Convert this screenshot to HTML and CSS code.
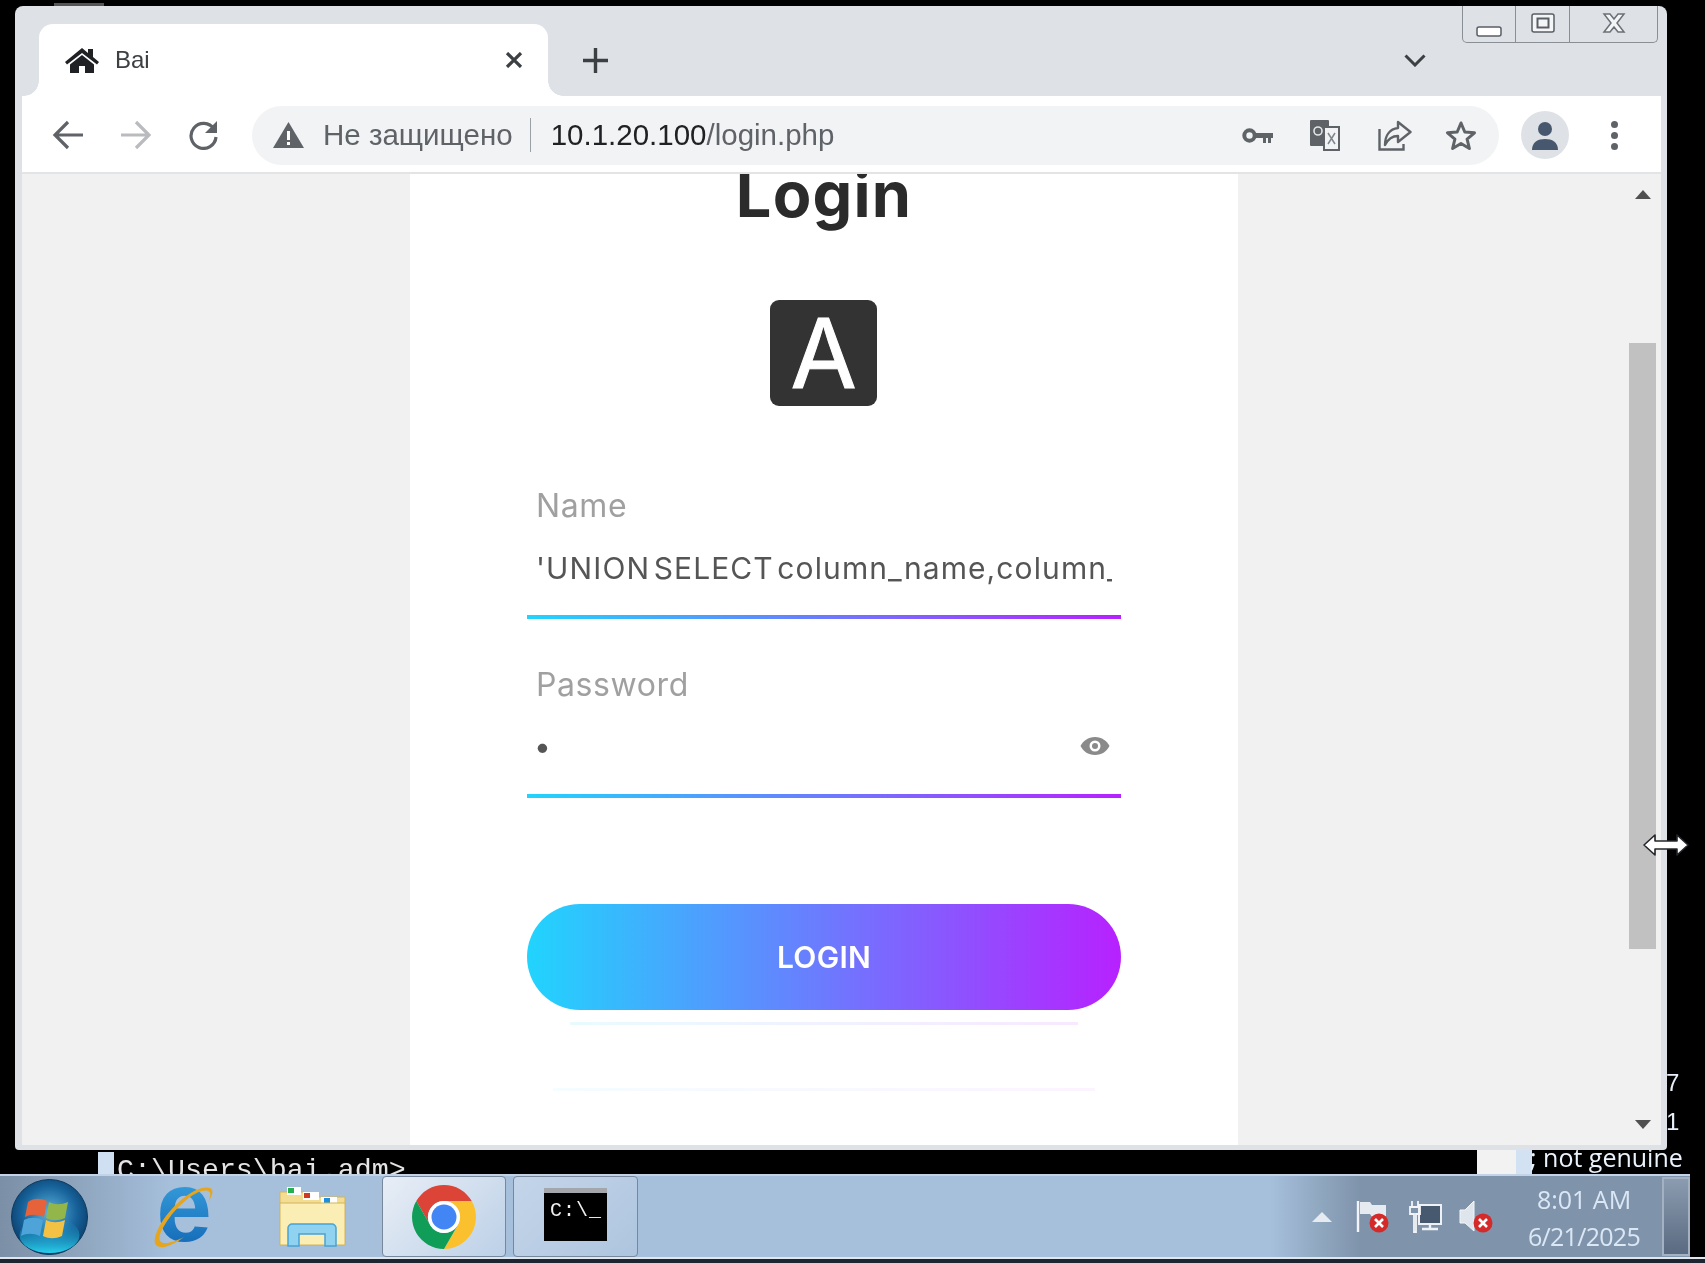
FILE: index.html
```html
<!DOCTYPE html>
<html lang="ru">
<head>
    <meta charset="UTF-8">
    <meta name="viewport" content="width=device-width, initial-scale=1.0">
    <title>Bai</title>
    <link rel="stylesheet" href="styles.css">
</head>
<body>
    <div class="desktop">
        <div class="smudge"></div>
        <div class="console-line">C:\Users\bai.adm&gt;</div>
        <div class="console-cursor"></div>
        <div class="console-digit digit-7">7</div>
        <div class="console-digit digit-1">1</div>
        <div class="genuine"><span class="genuine-block"></span><span class="genuine-text">; not genuine</span></div>

        <div class="window">
            <div class="win-controls">
                <div class="win-btn btn-min"><svg width="26" height="11" viewBox="0 0 26 11"><rect x="1" y="1" width="24" height="9" rx="2" fill="#fff" stroke="#5a5f66" stroke-width="1.5"/></svg></div>
                <div class="win-btn btn-max"><svg width="24" height="20" viewBox="0 0 24 20"><rect x="1" y="1" width="22" height="18" rx="2" fill="#f4f5f6" stroke="#5a5f66" stroke-width="1.5"/><rect x="6.5" y="5.5" width="11" height="9" fill="none" stroke="#5a5f66" stroke-width="2"/></svg></div>
                <div class="win-btn btn-close"><svg width="26" height="20" viewBox="0 0 26 20"><path d="M3 1h6l4 5 4-5h6l-7 9 7 9h-6l-4-5-4 5H3l7-9z" fill="#f4f5f6" stroke="#6b7077" stroke-width="1.5"/></svg></div>
            </div>

            <div class="tabstrip">
                <div class="tab">
                    <svg class="tab-home" width="36" height="26" viewBox="0 0 36 26"><path d="M18 1 1 15l2 2.5L18 6l15 11.5 2-2.5-6-5V2h-5v4z"/><path d="M18 8 6 17.5V26h9v-7h6v7h9v-8.5z"/></svg>
                    <span class="tab-title">Bai</span>
                    <svg class="tab-close" width="18" height="16" viewBox="0 0 18 16"><path d="M2 1l14 14M16 1 2 15" stroke="#3c4043" stroke-width="3.2" fill="none"/></svg>
                </div>
                <svg class="new-tab" width="25" height="25" viewBox="0 0 25 25"><path d="M12.5 0v25M0 12.5h25" stroke="#3c4043" stroke-width="3.4"/></svg>
                <svg class="tab-list" width="22" height="13" viewBox="0 0 22 13"><path d="M1.5 1.5 11 11l9.5-9.5" stroke="#3c4043" stroke-width="3" fill="none"/></svg>
            </div>

            <div class="toolbar">
                <svg class="nav-back" width="32" height="30" viewBox="0 0 32 30"><path d="M31 15H4M16 2 3 15l13 13" stroke="#5f6368" stroke-width="3.2" fill="none"/></svg>
                <svg class="nav-forward" width="32" height="30" viewBox="0 0 32 30"><path d="M1 15h27M16 2l13 13-13 13" stroke="#b9bbbe" stroke-width="3.2" fill="none"/></svg>
                <svg class="nav-reload" width="32" height="30" viewBox="0 0 32 30"><path d="M26 9A12.5 12.5 0 1 0 28 17" stroke="#5f6368" stroke-width="3.2" fill="none"/><path d="M29 1v12H17z" fill="#5f6368"/></svg>
                <div class="omnibox">
                    <svg class="warn" width="31" height="26" viewBox="0 0 31 26"><path d="M15.5 0 31 26H0z" fill="#5f6368"/><path d="M14 9h3v9h-3zM14 20h3v3h-3z" fill="#fff"/></svg>
                    <span class="not-secure">Не защищено</span>
                    <span class="omni-sep"></span>
                    <span class="url"><span class="url-host">10.1.20.100</span>/login.php</span>
                    <svg class="omni-key" width="31" height="15" viewBox="0 0 31 15"><circle cx="7.5" cy="7.5" r="5.2" fill="none" stroke="#5f6368" stroke-width="4"/><path d="M13 5h18v5h-2v5h-3v-5h-2v5h-3v-5h-8z" fill="#5f6368"/></svg>
                    <svg class="omni-translate" width="30" height="31" viewBox="0 0 30 31"><rect x="0" y="0" width="19" height="26" rx="1" fill="#5f6368"/><circle cx="8" cy="11" r="4" fill="none" stroke="#e4e5e7" stroke-width="1.6"/><rect x="14" y="7" width="15" height="23" fill="#f1f3f4" stroke="#5f6368" stroke-width="2"/><path d="M18 13l7 11M25 13l-7 11" stroke="#80868b" stroke-width="1.5"/></svg>
                    <svg class="omni-share" width="34" height="31" viewBox="0 0 34 31"><path d="M1.5 9v20.500h24V24" fill="none" stroke="#5f6368" stroke-width="2.4"/><path d="M20 2l12.500 10L20 22v-6c-6 0-10 3-13 9 0-10 5-16 13-17z" fill="none" stroke="#5f6368" stroke-width="2.4" stroke-linejoin="round"/></svg>
                    <svg class="omni-star" width="32" height="30" viewBox="0 0 32 30"><path d="M16 3l3.800 9 9.700.8-7.400 6.300 2.300 9.400L16 23.500l-8.400 5 2.300-9.400L2.500 12.800l9.700-.8z" fill="none" stroke="#5f6368" stroke-width="3" stroke-linejoin="round"/></svg>
                </div>
                <div class="avatar"><svg width="28" height="30" viewBox="0 0 28 30"><circle cx="14" cy="8" r="7" fill="#47586e"/><path d="M1 29c0-8 6-11 13-11s13 3 13 11z" fill="#47586e"/></svg></div>
                <div class="menu-dots"><span></span><span></span><span></span></div>
            </div>

            <div class="viewport">
                <div class="page">
                    <div class="card">
                        <h1 class="card-title">Login</h1>
                        <div class="logo">A</div>
                        <div class="field field-name">
                            <label class="field-label">Name</label>
                            <input class="field-input" type="text" value="'UNION SELECT column_name,column_name,column_name FROM users">
                            <div class="field-line"></div>
                        </div>
                        <div class="field field-pass">
                            <label class="field-label">Password</label>
                            <input class="field-input" type="password" value="1">
                            <svg class="eye" width="30" height="20" viewBox="0 0 30 20"><path d="M15 1C8 1 3 5 .500 10 3 15 8 19 15 19s12-4 14.500-9C27 5 22 1 15 1z" fill="#8a8a8a"/><circle cx="15" cy="10" r="5.500" fill="#fff"/><circle cx="15" cy="10" r="3" fill="#8a8a8a"/></svg>
                            <div class="field-line"></div>
                        </div>
                        <button class="login-btn">LOGIN</button>
                        <div class="ghost ghost-one"></div>
                        <div class="ghost ghost-two"></div>
                    </div>
                </div>
                <div class="scrollbar">
                    <span class="arrow-up"></span>
                    <div class="thumb"></div>
                    <span class="arrow-down"></span>
                </div>
            </div>
        </div>

        <svg class="resize-cursor" width="48" height="24" viewBox="0 0 48 24"><path d="M2 12 13 2v6h22V2l11 10-11 10v-6H13v6z" fill="#fff" stroke="#23262b" stroke-width="1.6" stroke-linejoin="round"/></svg>
    </div>

    <div class="taskbar">
        <svg class="orb" width="77" height="76" viewBox="0 0 77 76">
            <defs>
                <radialGradient id="orbFill" cx="50%" cy="45%" r="55%"><stop offset="0" stop-color="#5fb4dd"/><stop offset=".65" stop-color="#17639b"/><stop offset="1" stop-color="#0c3f6d"/></radialGradient>
                <linearGradient id="orbLow" x1="0" y1="0" x2="0" y2="1"><stop offset="0" stop-color="#1a7fb8" stop-opacity="0"/><stop offset="1" stop-color="#27d0ee"/></linearGradient>
            </defs>
            <ellipse cx="38.500" cy="38" rx="38" ry="37.500" fill="url(#orbFill)" stroke="#0d3a5e" stroke-width="1"/>
            <ellipse cx="38.500" cy="56" rx="30" ry="18" fill="url(#orbLow)"/>
            <path d="M17 23c6-4 12-4 19-1l-3 16c-7-3-13-3-19 0z" fill="#e5623a"/>
            <path d="M38 23c6 3 12 3 19 0l-3 16c-7 3-13 3-19 0z" fill="#93b64a"/>
            <path d="M13 41c6-3 13-3 19 0l-3 16c-7-3-13-3-19 0z" fill="#4ea3d8"/>
            <path d="M35 41c6 3 12 3 19 0l-3 16c-7 3-13 3-19 0z" fill="#f3c244"/>
        </svg>
        <svg class="ie" width="64" height="64" viewBox="0 0 64 64">
            <defs><linearGradient id="ieFill" x1="0" y1="0" x2="0" y2="1"><stop offset="0" stop-color="#46b4ea"/><stop offset="1" stop-color="#0d5fb0"/></linearGradient></defs>
            <text x="34" y="56" class="ie-letter" fill="url(#ieFill)">e</text>
            <path d="M60 3C48-1 22 18 9 42c-6 12-6 19 1 20 7 1 16-4 24-10C26 56 15 60 11 57 7 54 11 44 20 32 32 16 50 3 58 6c3 1 3 5 0 11 5-7 6-12 2-14z" fill="#e5a51f"/>
        </svg>
        <svg class="folder" width="67" height="61" viewBox="0 0 67 61">
            <path d="M1 6h24l4 5h37v48H1z" fill="#f3dd92" stroke="#d2b45c" stroke-width="1"/>
            <rect x="8" y="1" width="14" height="8" fill="#fff"/><rect x="9" y="2" width="6" height="5" fill="#22b14c"/>
            <rect x="24" y="6" width="16" height="8" fill="#fff"/><rect x="25" y="7" width="6" height="5" fill="#cf3a24"/>
            <rect x="42" y="11" width="16" height="8" fill="#fff"/><rect x="45" y="12" width="6" height="5" fill="#1b8fe0"/>
            <path d="M1 17h65v42H1z" fill="#fbeeb4" stroke="#d2b45c" stroke-width="1"/>
            <path d="M9 60V42c0-2 2-4 4-4h40c2 0 4 2 4 4v18H46V48H20v12z" fill="#8fd3f0" stroke="#4aa3d4" stroke-width="1.500"/>
        </svg>
        <div class="task-btn task-chrome">
            <svg width="64" height="64" viewBox="0 0 64 64">
                <path d="M59.700 16A32 32 0 0 0 4.300 16L18.100 40A16 16 0 0 1 32 16z" fill="#db4437"/>
                <path d="M59.700 16A32 32 0 0 0 4.300 16L18.100 40A16 16 0 0 1 32 16z" fill="#fbc02d" transform="rotate(120 32 32)"/>
                <path d="M59.700 16A32 32 0 0 0 4.300 16L18.100 40A16 16 0 0 1 32 16z" fill="#0f9d58" transform="rotate(240 32 32)"/>
                <circle cx="32" cy="32" r="16" fill="#fff"/>
                <circle cx="32" cy="32" r="12.500" fill="#4285f4"/>
            </svg>
        </div>
        <div class="task-btn task-cmd">
            <div class="cmd-icon"><span class="cmd-prompt">C:\_</span></div>
        </div>
        <div class="tray">
            <span class="tray-up"></span>
            <svg class="tray-icon tray-flag" width="34" height="33" viewBox="0 0 34 33"><path d="M2 1v31" stroke="#f2f4f7" stroke-width="2.400"/><path d="M4 2h10l2 3h14v12H16l-2-3H4z" fill="#e6ebf1"/><circle cx="23" cy="23" r="9.500" fill="#d42a2a"/><path d="M19 19l8 8M27 19l-8 8" stroke="#fff" stroke-width="2.600"/></svg>
            <svg class="tray-icon tray-net" width="34" height="33" viewBox="0 0 34 33"><rect x="11" y="5" width="22" height="19" fill="#47596e" stroke="#eef1f5" stroke-width="2"/><path d="M22 24v4M14 29h16" stroke="#eef1f5" stroke-width="2.400"/><path d="M4 1v6M10 1v6M2 7h10v7H8v18H6V14H2z" fill="none" stroke="#f2f4f7" stroke-width="1.800"/></svg>
            <svg class="tray-icon tray-sound" width="34" height="33" viewBox="0 0 34 33"><path d="M1 10h5l9-9v30l-9-8H1z" fill="#dfe5ec" stroke="#f4f6f8" stroke-width="1"/><circle cx="24" cy="23" r="9.500" fill="#d42a2a"/><path d="M20 19l8 8M28 19l-8 8" stroke="#fff" stroke-width="2.600"/></svg>
            <div class="clock"><span>8:01 AM</span><span class="clock-date">6/21/2025</span></div>
            <div class="show-desktop"></div>
        </div>
    </div>
    <div class="taskbar-edge"></div>
</body>
</html>
```

FILE: styles.css
```css
html, body {
    margin: 0;
    padding: 0;
    width: 1705px;
    height: 1263px;
    overflow: hidden;
    background-color: #000;
    font-family: "Liberation Sans", Arial, sans-serif;
}
/* the screenshot is an upscaled remote desktop, everything is a bit soft */
body {
    filter: blur(0.6px);
}

/* desktop behind the browser window */
.desktop {
    position: relative;
    height: 1174px;
    overflow: hidden;
}
.smudge {
    position: absolute;
    left: 54px;
    top: 3px;
    width: 50px;
    height: 3px;
    background-color: #555;
}
.console-line {
    position: absolute;
    left: 117px;
    top: 1154px;
    font-family: "Liberation Mono", monospace;
    font-size: 28.3px;
    line-height: 32px;
    color: #e4e4e4;
    white-space: nowrap;
}
.console-cursor {
    position: absolute;
    left: 98px;
    top: 1152px;
    width: 16px;
    height: 22px;
    background-color: #cfe0f2;
}
.console-digit {
    position: absolute;
    left: 1666px;
    font-family: "Liberation Sans", sans-serif;
    font-size: 24px;
    line-height: 28px;
    color: #e6effa;
}
.digit-7 { top: 1069px; }
.digit-1 { top: 1108px; }
.genuine {
    position: absolute;
    left: 1477px;
    top: 1150px;
    display: flex;
}
.genuine-block {
    width: 55px;
    height: 24px;
    background: linear-gradient(to right, #f2f2f2 70%, #d2e2f3 70%);
}
.genuine-text {
    margin-left: -2px;
    margin-top: -7px;
    font-family: "Open Sans", sans-serif;
    font-size: 25px;
    line-height: 28px;
    color: #eaf2fb;
    white-space: nowrap;
}

/* browser window */
.window {
    position: absolute;
    left: 15px;
    top: 6px;
    width: 1652px;
    height: 1144px;
    box-sizing: border-box;
    padding: 0 6px 5px 7px;
    display: flex;
    flex-direction: column;
    background-color: #dee1e6;
    border-radius: 8px 8px 4px 4px;
}
.win-controls {
    position: absolute;
    top: 0;
    right: 9px;
    width: 196px;
    height: 37px;
    display: flex;
    box-sizing: border-box;
    border: 1.5px solid #8a8f96;
    border-top: none;
    border-radius: 0 0 5px 5px;
}
.win-btn {
    display: flex;
    align-items: center;
    justify-content: center;
}
.win-btn + .win-btn {
    border-left: 1.5px solid #8a8f96;
}
.btn-min { width: 52px; padding-top: 14px; box-sizing: border-box; }
.btn-max { width: 54px; padding-bottom: 3px; box-sizing: border-box; }
.btn-close { flex: 1; padding-bottom: 3px; box-sizing: border-box; }

.tabstrip {
    height: 90px;
    flex-shrink: 0;
    display: flex;
    align-items: flex-end;
}
.tab {
    position: relative;
    width: 509px;
    height: 72px;
    margin-left: 17px;
    box-sizing: border-box;
    padding: 0 25px 0 25px;
    display: flex;
    align-items: center;
    background-color: #fff;
    border-radius: 14px 14px 0 0;
}
/* little feet at the bottom corners of the tab */
.tab::before, .tab::after {
    content: "";
    position: absolute;
    bottom: 0;
    width: 15px;
    height: 15px;
}
.tab::before {
    left: -15px;
    background: radial-gradient(circle at 0 0, transparent 14.5px, #fff 15px);
}
.tab::after {
    right: -15px;
    background: radial-gradient(circle at 100% 0, transparent 14.5px, #fff 15px);
}
.tab-home { fill: #202124; }
.tab-title {
    margin-left: 15px;
    font-size: 24px;
    color: #3c4043;
}
.tab-close { margin-left: auto; }
.new-tab {
    margin: 0 0 23px 35px;
}
.tab-list {
    margin: 0 0 29px 796px;
}

.toolbar {
    height: 78px;
    flex-shrink: 0;
    box-sizing: border-box;
    display: flex;
    align-items: center;
    padding: 2px 0 0 30px;
    background-color: #fff;
    border-bottom: 2px solid #e3e4e6;
}
.nav-forward { margin-left: 36px; }
.nav-reload { margin-left: 36px; }
.omnibox {
    width: 1247px;
    height: 59px;
    margin-left: 32px;
    display: flex;
    align-items: center;
    box-sizing: border-box;
    padding-left: 21px;
    background-color: #f1f3f4;
    border-radius: 30px;
}
.not-secure {
    margin-left: 19px;
    font-size: 29.5px;
    color: #5f6368;
    white-space: nowrap;
}
.omni-sep {
    width: 1px;
    height: 34px;
    margin-left: 17px;
    background-color: #9aa0a6;
}
.url {
    margin-left: 20px;
    font-size: 29.5px;
    color: #5f6368;
    white-space: nowrap;
}
.url-host { color: #202124; }
.omni-key { margin-left: auto; }
.omni-translate { margin-left: 37px; }
.omni-share { margin-left: 38px; }
.omni-star { margin-left: 33px; margin-right: 22px; }
.avatar {
    width: 48px;
    height: 48px;
    margin-left: 22px;
    display: flex;
    align-items: flex-end;
    justify-content: center;
    box-sizing: border-box;
    padding-bottom: 8px;
    background-color: #dee1e6;
    border-radius: 50%;
}
.menu-dots {
    margin-left: 42px;
    display: flex;
    flex-direction: column;
    gap: 4px;
}
.menu-dots span {
    width: 7px;
    height: 7px;
    background-color: #5f6368;
    border-radius: 50%;
}

/* page in the browser */
.viewport {
    flex: 1;
    min-height: 0;
    display: flex;
    background-color: #f1f1f1;
}
.page {
    flex: 1;
    padding-left: 388px;
    overflow: hidden;
}
.card {
    width: 828px;
    height: 100%;
    box-sizing: border-box;
    padding: 0 117px;
    display: flex;
    flex-direction: column;
    overflow: hidden;
    background-color: #fff;
}
.card-title {
    margin: -10px 0 0;
    font-family: Inter, sans-serif;
    font-size: 63px;
    line-height: 60px;
    letter-spacing: 1.2px;
    font-weight: 700;
    color: #2b2b2b;
    text-align: center;
}
.logo {
    width: 107px;
    height: 106px;
    margin: 76px 0 0 243px;
    display: flex;
    align-items: center;
    justify-content: center;
    font-family: Inter, sans-serif;
    font-size: 96px;
    -webkit-text-stroke: 1px #fff;
    color: #fff;
    background-color: #333;
    border-radius: 9px;
}
.field {
    position: relative;
    display: flex;
    flex-direction: column;
}
.field-name { margin-top: 80px; }
.field-pass { margin-top: 46px; }
.field-label {
    height: 40px;
    margin-bottom: 17px;
    padding-left: 9px;
    font-family: Inter, sans-serif;
    font-size: 32px;
    line-height: 40px;
    letter-spacing: 0.6px;
    color: #a0a0a0;
}
.field-input {
    height: 72px;
    box-sizing: border-box;
    padding: 0 9px 22px;
    border: none;
    outline: none;
    background: transparent;
    font-family: Inter, sans-serif;
    font-size: 30px;
    letter-spacing: 1.1px;
    word-spacing: -6px;
    color: #555;
}
.field-pass .field-input {
    padding: 0 9px 25px 7px;
}
.field-line {
    height: 4px;
    background: linear-gradient(to right, #21d4fd, #b721ff);
}
.eye {
    position: absolute;
    right: 11px;
    top: 71px;
}
.login-btn {
    height: 106px;
    margin-top: 106px;
    flex-shrink: 0;
    border: none;
    border-radius: 53px;
    background: linear-gradient(to right, #21d4fd, #b721ff);
    font-family: Inter, sans-serif;
    font-size: 30px;
    letter-spacing: 0.3px;
    font-weight: 600;
    color: #fff;
}
.ghost {
    flex-shrink: 0;
    height: 3px;
    opacity: 0.1;
    background: linear-gradient(to right, #21d4fd, #b721ff);
}
.ghost-one { margin: 12px 43px 0; }
.ghost-two { margin: 63px 26px 0; opacity: 0.05; }

.scrollbar {
    width: 37px;
    position: relative;
}
.thumb {
    position: absolute;
    left: 5px;
    top: 169px;
    width: 27px;
    height: 606px;
    background-color: #c1c1c1;
}
.arrow-up, .arrow-down {
    position: absolute;
    left: 11px;
    width: 0;
    height: 0;
    border-left: 8px solid transparent;
    border-right: 8px solid transparent;
}
.arrow-up { top: 16px; border-bottom: 9px solid #505050; }
.arrow-down { bottom: 16px; border-top: 9px solid #505050; }

.resize-cursor {
    position: absolute;
    left: 1642px;
    top: 833px;
}

/* taskbar */
.taskbar {
    width: 1690px;
    height: 83px;
    box-sizing: border-box;
    padding-left: 11px;
    display: flex;
    align-items: center;
    background: linear-gradient(to right, #7b8fa6 0, #a6bfdb 170px, #a6bfdb 1270px, #7f94ab 1360px, #7f94ab 100%);
    border-top: 2px solid #c3d3e5;
}
.ie { margin-left: 62px; }
.ie-letter {
    font-family: "Liberation Sans", sans-serif;
    font-size: 100px;
    font-weight: 700;
    text-anchor: middle;
}
.folder { margin-left: 65px; }
.task-btn {
    width: 124px;
    height: 81px;
    box-sizing: border-box;
    display: flex;
    align-items: center;
    justify-content: center;
    border: 1px solid #77889c;
    border-radius: 4px;
}
.task-chrome {
    margin-left: 36px;
    background: linear-gradient(135deg, #e8eef6, #bcd0e7);
}
.task-cmd {
    width: 125px;
    margin-left: 7px;
    background: linear-gradient(135deg, #c4d5e9, #aec5df);
}
.cmd-icon {
    width: 63px;
    height: 53px;
    box-sizing: border-box;
    margin-bottom: 4px;
    padding: 7px 0 0 6px;
    background-color: #000;
    border-top: 5px solid #a3a7ac;
}
.cmd-prompt {
    display: block;
    font-family: "Liberation Mono", monospace;
    font-size: 20px;
    line-height: 22px;
    letter-spacing: 1px;
    color: #f0f0f0;
}
.tray {
    margin-left: auto;
    height: 100%;
    display: flex;
    align-items: center;
}
.tray-up {
    width: 0;
    height: 0;
    border-left: 10px solid transparent;
    border-right: 10px solid transparent;
    border-bottom: 10px solid #e6ebf2;
}
.tray-flag { margin-left: 24px; }
.tray-net { margin-left: 18px; }
.tray-sound { margin-left: 17px; }
.clock {
    width: 112px;
    margin-left: 35px;
    padding-top: 2px;
    display: flex;
    flex-direction: column;
    align-items: center;
    gap: 7px;
    font-family: "Open Sans", sans-serif;
    font-size: 25px;
    line-height: 30px;
    color: #dbe7f5;
    white-space: nowrap;
}
.clock-date { letter-spacing: -0.7px; }
.show-desktop {
    width: 28px;
    height: 79px;
    margin-left: 22px;
    box-sizing: border-box;
    border: 2px solid #a3b1c2;
    background: linear-gradient(to bottom, #8b9bb0, #5a6a80);
}
.taskbar-edge {
    height: 6px;
    box-sizing: border-box;
    border-top: 2px solid #dfe6ee;
    background-color: #1d2630;
}
```
